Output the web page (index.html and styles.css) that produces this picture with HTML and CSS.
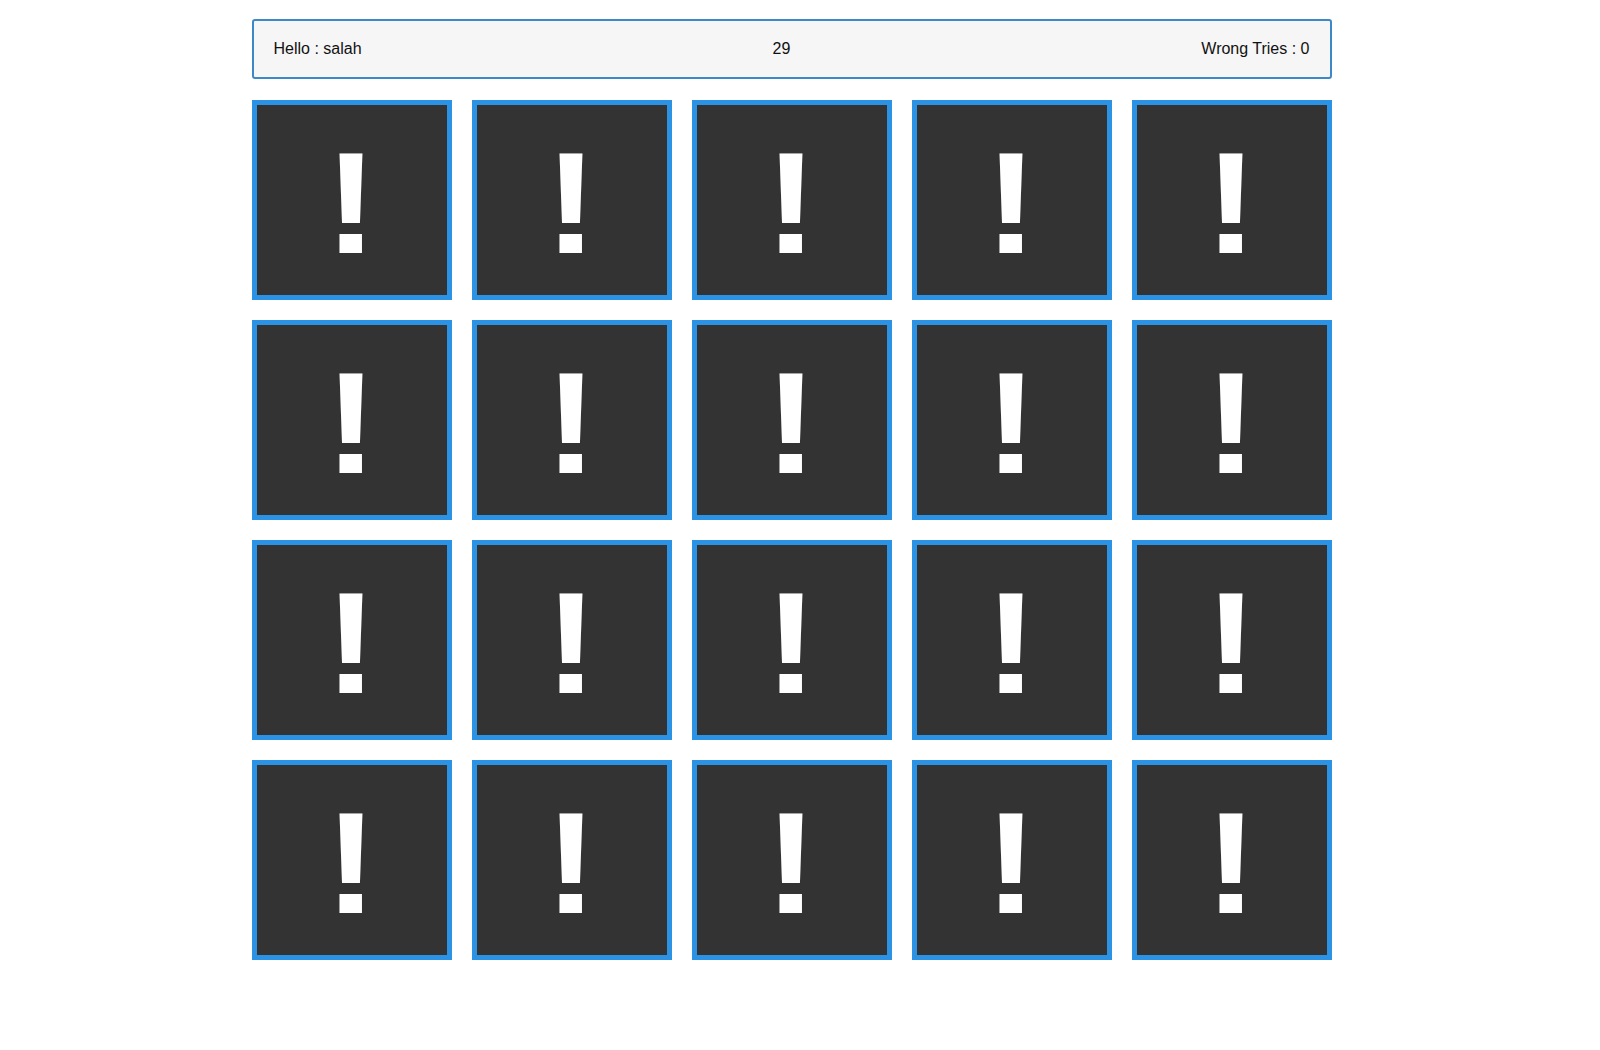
FILE: index.html
```html
<!DOCTYPE html>
<html>
<head>
<meta charset="utf-8">
<title>Memory Game</title>
<link rel="stylesheet" href="styles.css">
</head>
<body>
<div class="container">
  <div class="info">
    <div class="name">Hello : salah</div>
    <div class="timer">29</div>
    <div class="tries">Wrong Tries : 0</div>
  </div>
  <div class="blocks">
    <div class="block"><span class="mark">!</span></div>
    <div class="block"><span class="mark">!</span></div>
    <div class="block"><span class="mark">!</span></div>
    <div class="block"><span class="mark">!</span></div>
    <div class="block"><span class="mark">!</span></div>
    <div class="block"><span class="mark">!</span></div>
    <div class="block"><span class="mark">!</span></div>
    <div class="block"><span class="mark">!</span></div>
    <div class="block"><span class="mark">!</span></div>
    <div class="block"><span class="mark">!</span></div>
    <div class="block"><span class="mark">!</span></div>
    <div class="block"><span class="mark">!</span></div>
    <div class="block"><span class="mark">!</span></div>
    <div class="block"><span class="mark">!</span></div>
    <div class="block"><span class="mark">!</span></div>
    <div class="block"><span class="mark">!</span></div>
    <div class="block"><span class="mark">!</span></div>
    <div class="block"><span class="mark">!</span></div>
    <div class="block"><span class="mark">!</span></div>
    <div class="block"><span class="mark">!</span></div>
  </div>
</div>
</body>
</html>
```

FILE: styles.css
```css
html {
  overflow-y: scroll;
}
body {
  margin: 0;
  padding-right: 17px;
  font-family: "Liberation Sans", Arial, sans-serif;
  background: #fff;
  color: #111;
}
.container {
  width: 1080px;
  margin: 19px auto 0;
  padding-bottom: 400px;
}
.info {
  box-sizing: border-box;
  height: 60px;
  display: flex;
  align-items: center;
  justify-content: space-between;
  padding: 0 20px;
  background: #f6f6f6;
  border: 2px solid #3d88c6;
  border-radius: 3px;
  font-size: 16px;
}
.blocks {
  margin-top: 21px;
  display: grid;
  grid-template-columns: repeat(5, 200px);
  gap: 20px;
}
.block {
  box-sizing: border-box;
  width: 200px;
  height: 200px;
  background: #333;
  border: 5px solid #2b92e4;
  display: flex;
  align-items: center;
  justify-content: center;
}
.mark {
  color: #fff;
  font-family: "Liberation Sans", Arial, sans-serif;
  font-weight: bold;
  font-size: 145px;
  line-height: 1;
  margin-top: 7px;
  margin-left: -1px;
  transform: scaleX(1.1);
}
```
